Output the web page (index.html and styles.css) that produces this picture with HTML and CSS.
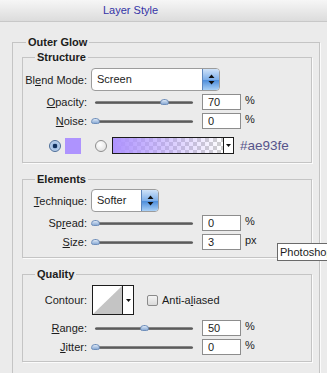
FILE: index.html
```html
<!DOCTYPE html>
<html lang="en">
<head>
  <meta charset="UTF-8" />
  <title>Layer Style</title>
  <link rel="stylesheet" href="styles.css">
</head>
<body>
  <div class="titlebar">Layer Style</div>

  <fieldset class="group outer">
    <legend>Outer Glow</legend>

    <fieldset class="group structure">
      <legend>Structure</legend>

      <div class="row tall">
        <label class="lbl">Bl<u>e</u>nd Mode:</label>
        <div class="popup blend">
          <span class="popup-text">Screen</span>
          <span class="popup-btn">
            <svg width="7" height="11" viewBox="0 0 7 11"><path d="M3.5 0.5 L6.5 4 L0.5 4 Z M0.5 7 L6.5 7 L3.5 10.5 Z" fill="#111"/></svg>
          </span>
        </div>
      </div>

      <div class="row slide">
        <label class="lbl"><u>O</u>pacity:</label>
        <div class="slider"><span class="thumb" style="left: 70%"></span></div>
        <input class="num" type="text" value="70">
        <span class="unit">%</span>
      </div>

      <div class="row slide">
        <label class="lbl"><u>N</u>oise:</label>
        <div class="slider"><span class="thumb" style="left: 0%"></span></div>
        <input class="num" type="text" value="0">
        <span class="unit">%</span>
      </div>

      <div class="row color-row">
        <span class="radio checked"></span>
        <span class="swatch"></span>
        <span class="radio second"></span>
        <div class="gradient">
          <span class="gradient-fill"></span>
          <span class="gradient-btn">
            <svg width="5" height="3" viewBox="0 0 5 3"><path d="M0 0 L5 0 L2.5 3 Z" fill="#111"/></svg>
          </span>
        </div>
        <span class="hex">#ae93fe</span>
      </div>
    </fieldset>

    <fieldset class="group elements">
      <legend>Elements</legend>

      <div class="row tall">
        <label class="lbl"><u>T</u>echnique:</label>
        <div class="popup technique">
          <span class="popup-text">Softer</span>
          <span class="popup-btn">
            <svg width="7" height="11" viewBox="0 0 7 11"><path d="M3.5 0.5 L6.5 4 L0.5 4 Z M0.5 7 L6.5 7 L3.5 10.5 Z" fill="#111"/></svg>
          </span>
        </div>
      </div>

      <div class="row slide">
        <label class="lbl">Sp<u>r</u>ead:</label>
        <div class="slider"><span class="thumb" style="left: 0%"></span></div>
        <input class="num" type="text" value="0">
        <span class="unit">%</span>
      </div>

      <div class="row slide">
        <label class="lbl"><u>S</u>ize:</label>
        <div class="slider"><span class="thumb" style="left: 0%"></span></div>
        <input class="num" type="text" value="3">
        <span class="unit">px</span>
      </div>
    </fieldset>

    <fieldset class="group quality">
      <legend>Quality</legend>

      <div class="row contour-row">
        <label class="lbl">Contour:</label>
        <div class="contour">
          <span class="contour-preview">
            <svg width="29" height="28" viewBox="0 0 29 28"><path d="M0 28 L29 0 L29 28 Z" fill="#c4c4c4"/></svg>
          </span>
          <span class="contour-btn">
            <svg width="5" height="3" viewBox="0 0 5 3"><path d="M0 0 L5 0 L2.5 3 Z" fill="#111"/></svg>
          </span>
        </div>
        <span class="checkbox"></span>
        <span class="check-label">Anti-a<u>l</u>iased</span>
      </div>

      <div class="row slide">
        <label class="lbl"><u>R</u>ange:</label>
        <div class="slider"><span class="thumb" style="left: 50%"></span></div>
        <input class="num" type="text" value="50">
        <span class="unit">%</span>
      </div>

      <div class="row slide">
        <label class="lbl"><u>J</u>itter:</label>
        <div class="slider"><span class="thumb" style="left: 0%"></span></div>
        <input class="num" type="text" value="0">
        <span class="unit">%</span>
      </div>
    </fieldset>
  </fieldset>

  <div class="tooltip">Photoshop</div>
</body>
</html>
```

FILE: styles.css
```css
html,
body {
  margin: 0;
  overflow: hidden;
}

body {
  position: relative;
  height: 373px;
  background-color: #ebebeb;
  font-family: "Liberation Sans", Arial, sans-serif;
  font-size: 11px;
  color: #1c1c1c;
}

.titlebar {
  height: 21px;
  line-height: 21px;
  padding-left: 103px;
  border-bottom: 1px solid #c8c8c8;
  background: linear-gradient(#f6f6f6, #dcdcdc);
  color: #3434a6;
}

/* group boxes */
.group {
  margin: 0;
  padding: 0;
  min-width: 0;
  border: 1px solid #c4c4c4;
  box-shadow: 1px 1px 0 #fbfbfb;
}

.group legend {
  font-weight: bold;
  line-height: 14px;
  padding: 0 2px;
  margin-left: 12px;
}

.outer {
  width: 308px;
  box-sizing: border-box;
  margin: 13px 0 0 12px;
  padding: 1px 7px 30px 9px;
}

.outer > legend {
  margin-left: 4px;
}

.structure {
  padding: 4px 0 8px 0;
}

.elements {
  margin-top: 9px;
  padding: 3px 0 7px 0;
}

.quality {
  margin-top: 9px;
  padding: 4px 0 6px 0;
}

/* rows */
.row {
  display: flex;
  align-items: center;
}

.row.tall {
  height: 23px;
}

.row.slide {
  height: 16px;
  margin-top: 3px;
}

.lbl {
  flex: none;
  width: 64px;
  text-align: right;
}

/* popup menus */
.popup {
  display: flex;
  height: 23px;
  margin-left: 4px;
  box-sizing: border-box;
  border: 1px solid #9c9c9c;
  border-radius: 4px;
  background: #fff;
}

.popup.blend {
  width: 129px;
}

.popup.technique {
  width: 68px;
}

.popup-text {
  flex: 1;
  line-height: 21px;
  padding-left: 5px;
}

.popup-btn {
  width: 16px;
  display: flex;
  align-items: center;
  justify-content: center;
  border-left: 1px solid #5d86bd;
  border-radius: 0 3px 3px 0;
  background: linear-gradient(#cfe2f8, #7fb0ea 50%, #4f8fdc 55%, #a9d0f6);
}

/* sliders */
.slider {
  position: relative;
  flex: none;
  width: 98px;
  height: 3px;
  margin-left: 8px;
  border-radius: 2px;
  background: linear-gradient(#9a9a9a, #4e4e4e 60%, #8a8a8a);
}

.thumb {
  position: absolute;
  top: -2px;
  width: 9px;
  height: 6px;
  margin-left: -4px;
  box-sizing: border-box;
  border: 1px solid #6f8fbb;
  border-radius: 5px 5px 3px 3px;
  background: linear-gradient(#dbe7f6, #8cacd6);
}

.num {
  flex: none;
  width: 39px;
  height: 16px;
  margin: 0 0 0 9px;
  padding: 0 0 0 5px;
  box-sizing: border-box;
  border: 1px solid #8d8d8d;
  background: #fff;
  font-family: inherit;
  font-size: 11px;
  color: #1c1c1c;
  outline: none;
}

.unit {
  margin-left: 4px;
  align-self: flex-start;
  line-height: 12px;
}

/* colour row */
.color-row {
  height: 17px;
  margin-top: 8px;
}

.radio {
  flex: none;
  width: 12px;
  height: 12px;
  box-sizing: border-box;
  border-radius: 50%;
  border: 1px solid #8e8e8e;
  background: radial-gradient(circle at 40% 35%, #fff, #dcdcdc);
}

.radio.checked {
  margin-left: 26px;
  border-color: #4b6d98;
  background: radial-gradient(circle, #10305c 0 2px, #9fbde2 2.6px, #d8e6f6);
}

.radio.second {
  margin-left: 14px;
}

.swatch {
  flex: none;
  width: 16px;
  height: 16px;
  margin-left: 4px;
  background: #ae93fe;
}

.gradient {
  display: flex;
  flex: none;
  width: 122px;
  height: 17px;
  margin-left: 5px;
  box-sizing: border-box;
  border: 1px solid #1c1c1c;
}

.gradient-fill {
  flex: 1;
  background:
    linear-gradient(to right, #ae93fe, rgba(174, 147, 254, 0)),
    repeating-conic-gradient(#cfcfcf 0 25%, #ffffff 0 50%) 0 0 / 8px 8px;
}

.gradient-btn {
  width: 9px;
  display: flex;
  align-items: center;
  justify-content: center;
  border-left: 1px solid #1c1c1c;
  background: #fff;
}

.hex {
  margin-left: 6px;
  font-size: 13.5px;
  color: #56548a;
}

/* contour */
.contour-row {
  height: 30px;
}

.contour {
  display: flex;
  height: 30px;
  width: 42px;
  margin-left: 5px;
  box-sizing: border-box;
  border: 1px solid #1c1c1c;
  background: #fff;
}

.contour-preview {
  display: flex;
  flex: 1;
}

.contour-btn {
  width: 10px;
  display: flex;
  align-items: center;
  justify-content: center;
  border-left: 1px solid #1c1c1c;
}

.checkbox {
  flex: none;
  width: 11px;
  height: 11px;
  margin-left: 13px;
  box-sizing: border-box;
  border: 1px solid #8a8a8a;
  border-radius: 2px;
  background: linear-gradient(#f4f4f4, #dadada);
}

.check-label {
  margin-left: 4px;
}

.quality .row.slide:nth-of-type(2) {
  margin-top: 5px;
}

/* tooltip */
.tooltip {
  position: absolute;
  left: 277px;
  top: 243px;
  height: 16px;
  padding: 0 3px 0 2px;
  border: 1px solid #6a6a6a;
  background: #fff;
  font-size: 11px;
  line-height: 16px;
  white-space: nowrap;
}
```
